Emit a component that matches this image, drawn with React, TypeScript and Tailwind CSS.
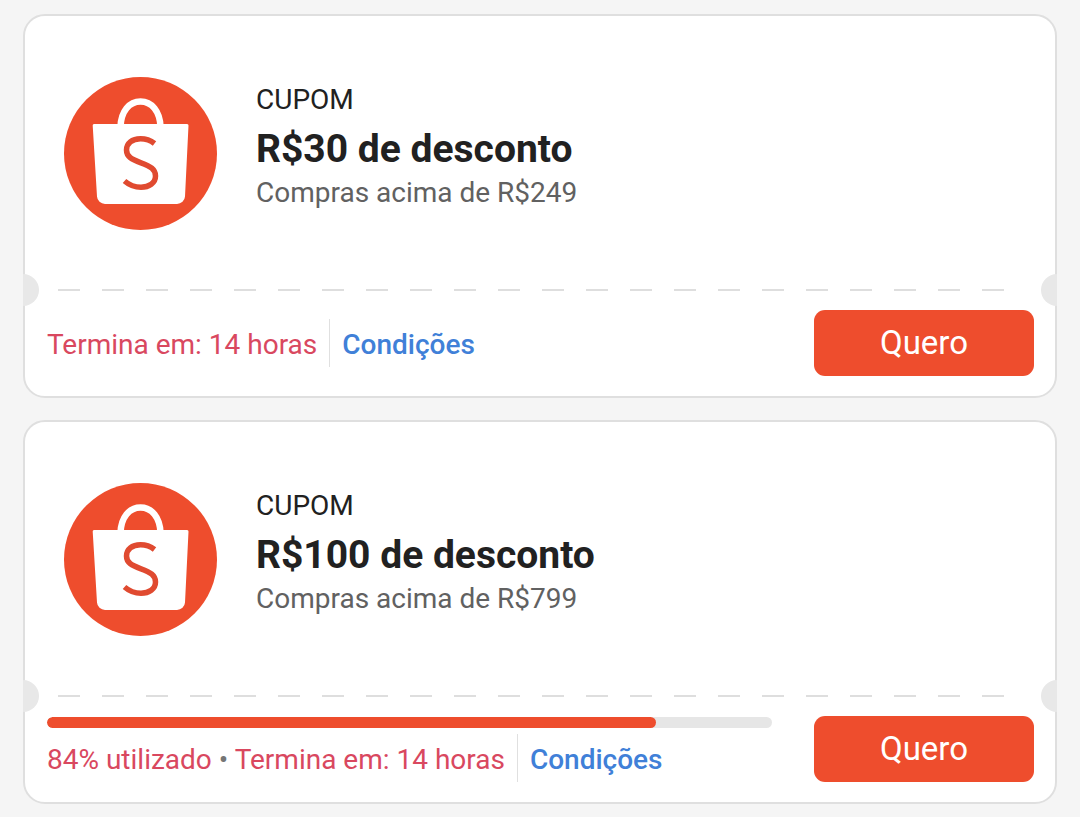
type Coupon = {
  id: string;
  title: string;
  minimum: string;
  ends: string;
  used?: number;
};

const coupons: Coupon[] = [
  {
    id: "cupom-30",
    title: "R$30 de desconto",
    minimum: "Compras acima de R$249",
    ends: "Termina em: 14 horas",
  },
  {
    id: "cupom-100",
    title: "R$100 de desconto",
    minimum: "Compras acima de R$799",
    ends: "Termina em: 14 horas",
    used: 84,
  },
];

const BagLogo = () => {
  return (
    <svg
      viewBox="0 0 154 154"
      className="size-[154px] shrink-0"
      fill="none"
      aria-hidden="true"
    >
      <circle cx="76.500" cy="76.500" r="76.500" fill="#ee4d2d" />
      <path
        d="M56.500 50C57 34 65.500 24.500 76.500 24.500s19.500 9.500 20 25.500"
        stroke="#fff"
        strokeWidth="6.500"
      />
      <path
        d="M30 47h93a1.500 1.500 0 0 1 1.500 1.600L121 119.500a8 8 0 0 1-8 7.500H41a8 8 0 0 1-8-7.500L28.700 48.600A1.500 1.500 0 0 1 30 47Z"
        fill="#fff"
      />
      <path
        d="M90.500 66.500C86.500 63.300 81.500 61.700 76.500 61.700c-8.500 0-14 4.600-14 11.300 0 7 5.500 9.500 14.500 12.800 9.500 3.500 14.500 6.500 14.500 13.200 0 7-6.500 11.300-14.500 11.300-6.500 0-11.500-2-16.500-6.300"
        stroke="#e04a30"
        strokeWidth="5.500"
      />
    </svg>
  );
};

const Divider = () => {
  return (
    <div className="relative">
      <div className="ml-[33px] mr-[51px] h-0.5 bg-[repeating-linear-gradient(90deg,#dedede_0_22px,transparent_22px_44px)]" />
      <span className="absolute -left-0.5 -top-[15px] h-8 w-4 rounded-r-full bg-[#e8e8e8]" />
      <span className="absolute -right-0.5 -top-[15px] h-8 w-4 rounded-l-full bg-[#e8e8e8]" />
    </div>
  );
};

const CouponCard = ({ coupon }: { coupon: Coupon }) => {
  return (
    <article className="rounded-[22px] border-2 border-[#dfdfdf] bg-white">
      <div className="flex gap-[38px] px-[39px] pb-[58px] pt-[61px]">
        <BagLogo />
        <div className="pt-1">
          <p className="text-[28px] leading-[38px] text-[#212121]">CUPOM</p>
          <h2 className="text-[39px] font-bold leading-[60px] text-[#212121]">
            {coupon.title}
          </h2>
          <p className="text-[28px] leading-7 text-[#616161]">
            {coupon.minimum}
          </p>
        </div>
      </div>

      <Divider />

      <div className="flex gap-[42px] pb-5 pl-[22px] pr-[21px] pt-[19px]">
        <div className="flex flex-1 flex-col justify-center gap-1.5">
          {coupon.used !== undefined && (
            <div
              role="progressbar"
              aria-label="Cupons utilizados"
              aria-valuenow={coupon.used}
              aria-valuemin={0}
              aria-valuemax={100}
              className="h-[11px] overflow-hidden rounded-full bg-[#e6e6e6]"
            >
              <div
                className="h-full rounded-full bg-[#ee4d2d]"
                style={{ width: `${coupon.used}%` }}
              />
            </div>
          )}

          <div className="flex items-center text-[28px] leading-[44px]">
            <p className="pr-3 pt-1 text-[#d9485f]">
              {coupon.used !== undefined && (
                <>
                  {coupon.used}% utilizado
                  <span className="text-[#757575]"> • </span>
                </>
              )}
              {coupon.ends}
            </p>
            <a
              href={`#${coupon.id}`}
              className="border-l border-[#e0e0e0] pl-3 pt-1 font-medium text-[#4080d8]"
            >
              Condições
            </a>
          </div>
        </div>

        <button
          type="button"
          className="h-[66px] w-[220px] shrink-0 rounded-[11px] bg-[#ee4d2d] text-[33px] text-white"
        >
          Quero
        </button>
      </div>
    </article>
  );
};

const App = () => {
  return (
    <main className="flex min-h-screen flex-col gap-[22px] bg-[#f5f5f5] px-[23px] pb-3 pt-3.5 font-[Roboto,sans-serif]">
      {coupons.map((coupon) => (
        <CouponCard key={coupon.id} coupon={coupon} />
      ))}
    </main>
  );
};

export default App;
